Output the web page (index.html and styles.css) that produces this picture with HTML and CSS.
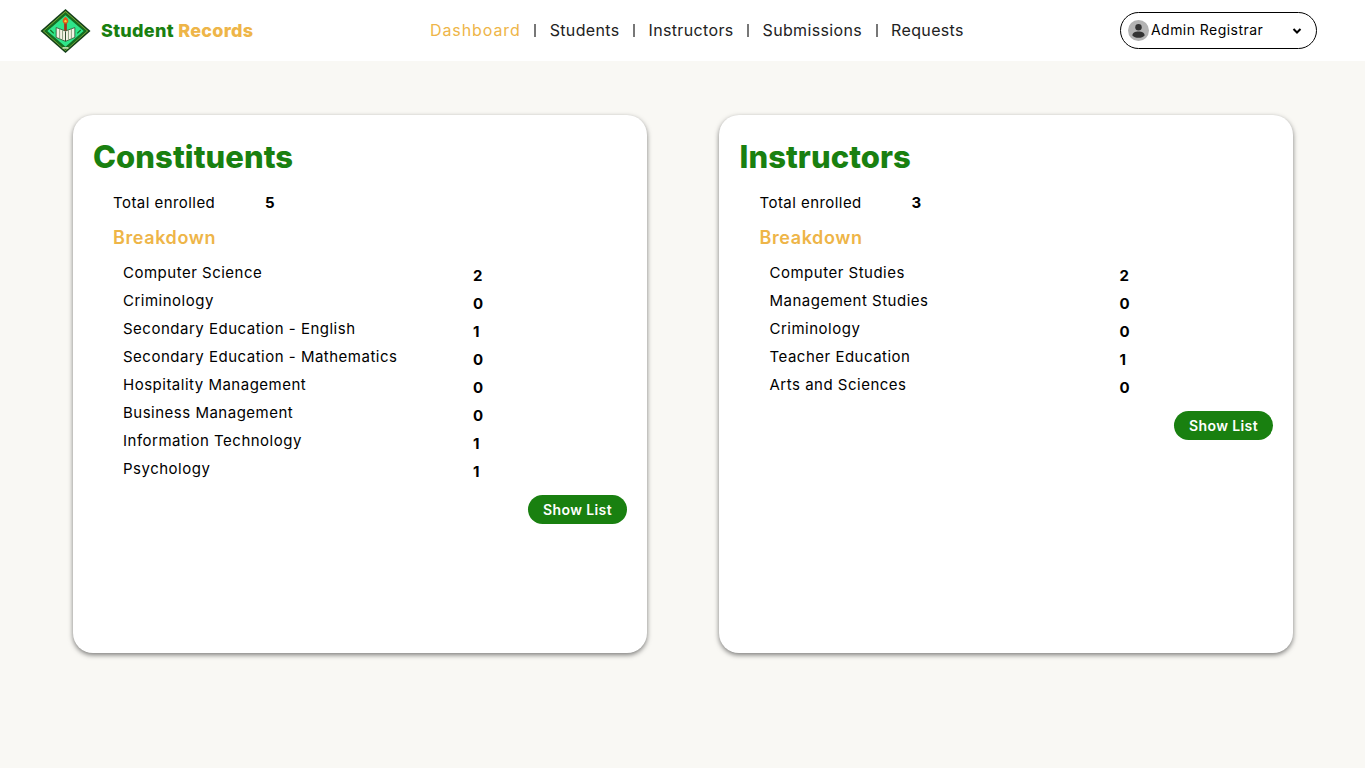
FILE: index.html
```html
<!DOCTYPE html>
<html lang="en">
<head>
    <meta charset="UTF-8">
    <meta name="viewport" content="width=device-width, initial-scale=1.0">
    <title>Student Records</title>
    <link rel="stylesheet" href="styles.css">
</head>
<body>

    <div class="navbar">
        <div class="brand">
            <svg class="logo" viewBox="0 0 52 46">
                <polygon points="26,0.500 51.500,23 26,45.500 0.500,23" fill="#12401a"/>
                <polygon points="26,2.500 49,23 26,43.500 3,23" fill="#8fb53a"/>
                <polygon points="26,3.500 48,23 26,42.500 4,23" fill="#146f22"/>
                <polygon points="26,7 44.500,23 26,39 7.500,23" fill="#2fe68a"/>
                <rect x="23" y="39.500" width="6" height="1.500" fill="#dff0c8"/>
                <rect x="24.600" y="14" width="2.800" height="9" fill="#a8321c"/>
                <path d="M26 8.500c2.400 1.800 3.200 3.400 2.800 5-.3 1.300-1.500 2-2.800 2s-2.500-.7-2.800-2c-.4-1.600.4-3.200 2.800-5z" fill="#e2591a"/>
                <circle cx="26" cy="13" r="1.200" fill="#f7d933"/>
                <path d="M16.500 19.500l9.500 3.500 9.500-3.500v10L26 33.500l-9.500-4z" fill="#f3f3e4" stroke="#2c4a2c" stroke-width="0.800"/>
                <path d="M20 21v9.500M23 22.200v9.500M29 22.200v9.500M32 21v9.500" stroke="#6f8a64" stroke-width="0.800"/>
                <path d="M26 23.500v10" stroke="#2c4a2c" stroke-width="1"/>
                <path d="M10.500 22l3.500 3.500M38 25.500l3.500-3.500" stroke="#146f22" stroke-width="1.200"/>
            </svg>
            <span class="brand-name">Student <span class="gold">Records</span></span>
        </div>

        <div class="nav-links">
            <a class="active" href="#">Dashboard</a>
            <span class="sep"></span>
            <a href="#">Students</a>
            <span class="sep"></span>
            <a href="#">Instructors</a>
            <span class="sep"></span>
            <a href="#">Submissions</a>
            <span class="sep"></span>
            <a href="#">Requests</a>
        </div>

        <div class="user-menu">
            <svg class="avatar" viewBox="0 0 22 22">
                <circle cx="11" cy="11" r="11" fill="#b3b3b3"/>
                <circle cx="11" cy="7.600" r="3.400" fill="#333"/>
                <path d="M4.600 16.200c0-2.800 2.600-4.200 6.400-4.200s6.400 1.400 6.400 4.200c-1.400 1.600-3.600 2.400-6.400 2.400s-5-.8-6.400-2.400z" fill="#333"/>
            </svg>
            <span class="user-name">Admin Registrar</span>
            <svg class="chevron" viewBox="0 0 10 8">
                <path d="M1.500 2l3.500 3.500L8.500 2" fill="none" stroke="#000" stroke-width="2"/>
            </svg>
        </div>
    </div>

    <div class="container">
        <div class="card">
            <h1>Constituents</h1>
            <div class="total"><span class="total-label">Total enrolled</span><b>5</b></div>
            <h2>Breakdown</h2>
            <div class="row"><span>Computer Science</span><b>2</b></div>
            <div class="row"><span>Criminology</span><b>0</b></div>
            <div class="row"><span>Secondary Education - English</span><b>1</b></div>
            <div class="row"><span>Secondary Education - Mathematics</span><b>0</b></div>
            <div class="row"><span>Hospitality Management</span><b>0</b></div>
            <div class="row"><span>Business Management</span><b>0</b></div>
            <div class="row"><span>Information Technology</span><b>1</b></div>
            <div class="row"><span>Psychology</span><b>1</b></div>
            <div class="actions"><button class="show-btn">Show List</button></div>
        </div>

        <div class="card">
            <h1>Instructors</h1>
            <div class="total"><span class="total-label">Total enrolled</span><b>3</b></div>
            <h2>Breakdown</h2>
            <div class="row"><span>Computer Studies</span><b>2</b></div>
            <div class="row"><span>Management Studies</span><b>0</b></div>
            <div class="row"><span>Criminology</span><b>0</b></div>
            <div class="row"><span>Teacher Education</span><b>1</b></div>
            <div class="row"><span>Arts and Sciences</span><b>0</b></div>
            <div class="actions"><button class="show-btn">Show List</button></div>
        </div>
    </div>

</body>
</html>
```

FILE: styles.css
```css
body {
    font-family: 'Inter', 'Open Sans', sans-serif;
    margin: 0;
    padding: 0;
    background: #f9f8f4;
    color: #000;
    height: 768px;
    overflow: hidden;
}

.navbar {
    display: flex;
    align-items: center;
    height: 61px;
    background: #fff;
    padding: 0 48px 0 40px;
}

.brand {
    display: flex;
    align-items: center;
    gap: 10px;
    width: 390px;
}

.logo {
    width: 51px;
    height: 46px;
}

.brand-name {
    font-size: 18px;
    font-weight: 800;
    letter-spacing: 0.3px;
    color: #198010;
}

.gold {
    color: #eeb548;
}

.nav-links {
    display: flex;
    align-items: center;
    gap: 13.5px;
    padding-bottom: 2px;
    font-size: 16px;
    letter-spacing: 0.35px;
}

.nav-links a {
    text-decoration: none;
    color: #222;
}

.nav-links a.active {
    color: #eeb548;
    letter-spacing: 0.9px;
}

.sep {
    width: 2px;
    height: 13px;
    margin-top: 2px;
    background: #777;
}

.user-menu {
    display: flex;
    align-items: center;
    box-sizing: border-box;
    width: 197px;
    height: 37px;
    margin-left: auto;
    border: 1px solid #000;
    border-radius: 19px;
    padding: 0 14px 0 7px;
    font-size: 14px;
    letter-spacing: 0.45px;
}

.avatar {
    width: 21px;
    height: 21px;
    margin-right: 2px;
}

.user-name {
    flex: 1;
    padding-bottom: 2px;
}

.chevron {
    width: 10px;
    height: 8px;
}

.container {
    display: flex;
    justify-content: space-between;
    padding: 54px 72px 0 73px;
}

.card {
    box-sizing: border-box;
    width: 574px;
    height: 538px;
    background: #fff;
    border-radius: 20px;
    padding: 20px;
    box-shadow: 0px 2px 5px rgba(0, 0, 0, 0.5);
}

.card + .card {
    padding-left: 20.5px;
}

h1 {
    margin: 0 0 13px;
    font-size: 31px;
    line-height: 44px;
    font-weight: 800;
    letter-spacing: 0.05px;
    color: #198010;
}

.total {
    display: flex;
    padding-left: 20px;
    font-size: 15px;
    line-height: 22px;
}

.total-label {
    width: 152px;
    letter-spacing: 0.45px;
}

h2 {
    margin: 11px 0 11px 20px;
    font-size: 18px;
    line-height: 26px;
    font-weight: 600;
    letter-spacing: 0.6px;
    color: #eeb548;
}

.row {
    display: flex;
    padding-left: 30px;
    height: 28px;
    font-size: 15px;
    line-height: 22px;
}

.row span {
    width: 350px;
    letter-spacing: 0.5px;
}

.row b {
    padding-top: 3px;
}

.actions {
    display: flex;
    justify-content: flex-end;
    margin-top: 9px;
}

.show-btn {
    height: 29px;
    width: 99px;
    background: #198010;
    color: #fff;
    border: none;
    border-radius: 15px;
    font-family: inherit;
    font-size: 14px;
    font-weight: 600;
    letter-spacing: 0.4px;
    cursor: pointer;
}
```
